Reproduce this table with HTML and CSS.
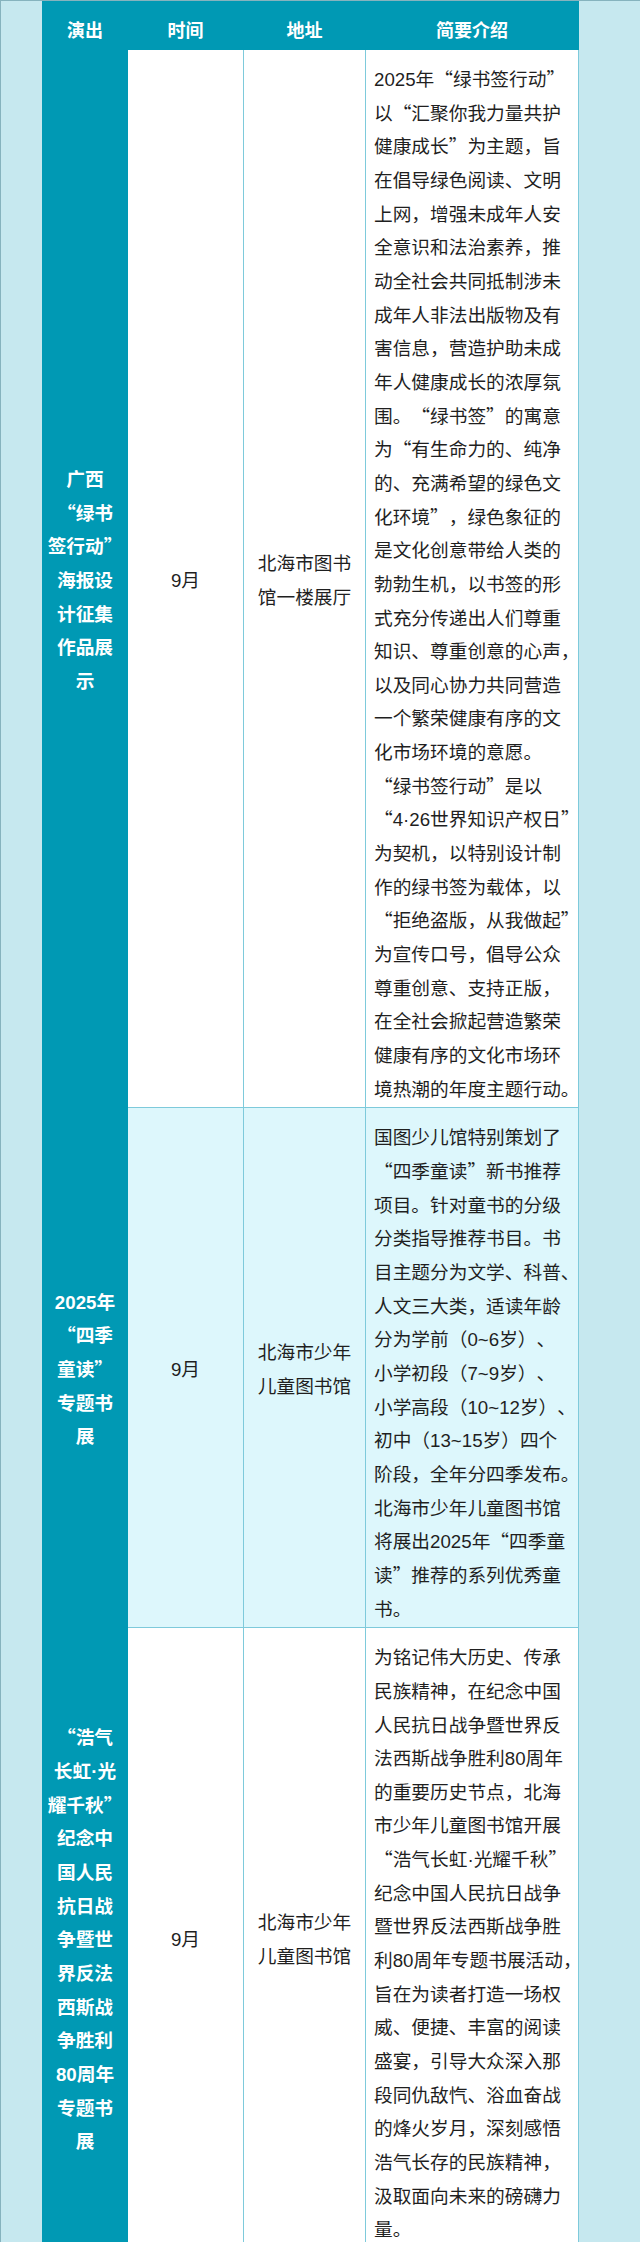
FILE: index.html
```html
<!DOCTYPE html>
<html lang="zh-CN">
<head>
<meta charset="utf-8">
<title>展览活动</title>
<link rel="stylesheet" href="styles.css">
</head>
<body>
<table class="board">
  <colgroup>
    <col class="c-name">
    <col class="c-time">
    <col class="c-place">
    <col class="c-intro">
  </colgroup>
  <thead>
    <tr>
      <th>演出</th>
      <th>时间</th>
      <th>地址</th>
      <th>简要介绍</th>
    </tr>
  </thead>
  <tbody>
    <tr class="row">
      <td class="name">广西<br>“绿书<br>签行动”<br>海报设<br>计征集<br>作品展<br>示</td>
      <td class="time"><span class="n">9</span>月</td>
      <td class="place">北海市图书<br>馆一楼展厅</td>
      <td class="intro"><span class="n">2025</span>年“绿书签行动”<br>以“汇聚你我力量共护<br>健康成长”为主题，旨<br>在倡导绿色阅读、文明<br>上网，增强未成年人安<br>全意识和法治素养，推<br>动全社会共同抵制涉未<br>成年人非法出版物及有<br>害信息，营造护助未成<br>年人健康成长的浓厚氛<br>围。“绿书签”的寓意<br>为“有生命力的、纯净<br>的、充满希望的绿色文<br>化环境”，绿色象征的<br>是文化创意带给人类的<br>勃勃生机，以书签的形<br>式充分传递出人们尊重<br>知识、尊重创意的心声，<br>以及同心协力共同营造<br>一个繁荣健康有序的文<br>化市场环境的意愿。<br>“绿书签行动”是以<br>“<span class="n">4·26</span>世界知识产权日”<br>为契机，以特别设计制<br>作的绿书签为载体，以<br>“拒绝盗版，从我做起”<br>为宣传口号，倡导公众<br>尊重创意、支持正版，<br>在全社会掀起营造繁荣<br>健康有序的文化市场环<br>境热潮的年度主题行动。</td>
    </tr>
    <tr class="row alt">
      <td class="name"><span class="n">2025</span>年<br>“四季<br>童读”<br>专题书<br>展</td>
      <td class="time"><span class="n">9</span>月</td>
      <td class="place">北海市少年<br>儿童图书馆</td>
      <td class="intro">国图少儿馆特别策划了<br>“四季童读”新书推荐<br>项目。针对童书的分级<br>分类指导推荐书目。书<br>目主题分为文学、科普、<br>人文三大类，适读年龄<br>分为学前（<span class="n">0~6</span>岁）、<br>小学初段（<span class="n">7~9</span>岁）、<br>小学高段（<span class="n">10~12</span>岁）、<br>初中（<span class="n">13~15</span>岁）四个<br>阶段，全年分四季发布。<br>北海市少年儿童图书馆<br>将展出<span class="n">2025</span>年“四季童<br>读”推荐的系列优秀童<br>书。</td>
    </tr>
    <tr class="row">
      <td class="name">“浩气<br>长虹<span class="n">·</span>光<br>耀千秋”<br>纪念中<br>国人民<br>抗日战<br>争暨世<br>界反法<br>西斯战<br>争胜利<br><span class="n">80</span>周年<br>专题书<br>展</td>
      <td class="time"><span class="n">9</span>月</td>
      <td class="place">北海市少年<br>儿童图书馆</td>
      <td class="intro">为铭记伟大历史、传承<br>民族精神，在纪念中国<br>人民抗日战争暨世界反<br>法西斯战争胜利<span class="n">80</span>周年<br>的重要历史节点，北海<br>市少年儿童图书馆开展<br>“浩气长虹<span class="n">·</span>光耀千秋”<br>纪念中国人民抗日战争<br>暨世界反法西斯战争胜<br>利<span class="n">80</span>周年专题书展活动，<br>旨在为读者打造一场权<br>威、便捷、丰富的阅读<br>盛宴，引导大众深入那<br>段同仇敌忾、浴血奋战<br>的烽火岁月，深刻感悟<br>浩气长存的民族精神，<br>汲取面向未来的磅礴力<br>量。</td>
    </tr>
  </tbody>
</table>
</body>
</html>
```

FILE: styles.css
```css
html {
  background: #c6e8ef;
}

body {
  margin: 0;
  min-height: 2241px;
  border-top: 1px solid #86b3be;
  border-left: 1px solid #86b3be;
  font-family: "Noto Sans CJK SC", "Liberation Sans", sans-serif;
  color: #1f1f1f;
  text-spacing-trim: space-all;
}

.board {
  margin-left: 41px;
  width: 536px;
  table-layout: fixed;
  border-collapse: collapse;
}

.c-name { width: 85px; }
.c-time { width: 116px; }
.c-place { width: 122px; }
.c-intro { width: 213px; }

.board th {
  height: 41px;
  padding: 6px 0 0;
  background: #0099b4;
  color: #ffffff;
  font-size: 18px;
  font-weight: bold;
  line-height: 24px;
  text-align: center;
  vertical-align: middle;
  border: 1px solid #0099b4;
}

.board td {
  border: 1px solid #7ecadb;
  font-size: 18.7px;
  line-height: 33.65px;
  white-space: nowrap;
}

.row td {
  background: #ffffff;
}

.row.alt td {
  background: #ddf7fc;
}

.board td.name {
  background: #0099b4;
  border-color: #0099b4;
  color: #ffffff;
  font-weight: bold;
  text-align: center;
  vertical-align: middle;
  padding: 0 4px;
}

.board td.time,
.board td.place {
  text-align: center;
  vertical-align: middle;
  padding: 0 4px;
}

.board td.intro {
  vertical-align: top;
  padding: 11px 4px 3px 8px;
}

.n {
  font-family: "Liberation Sans", sans-serif;
  line-height: 1;
}
```
